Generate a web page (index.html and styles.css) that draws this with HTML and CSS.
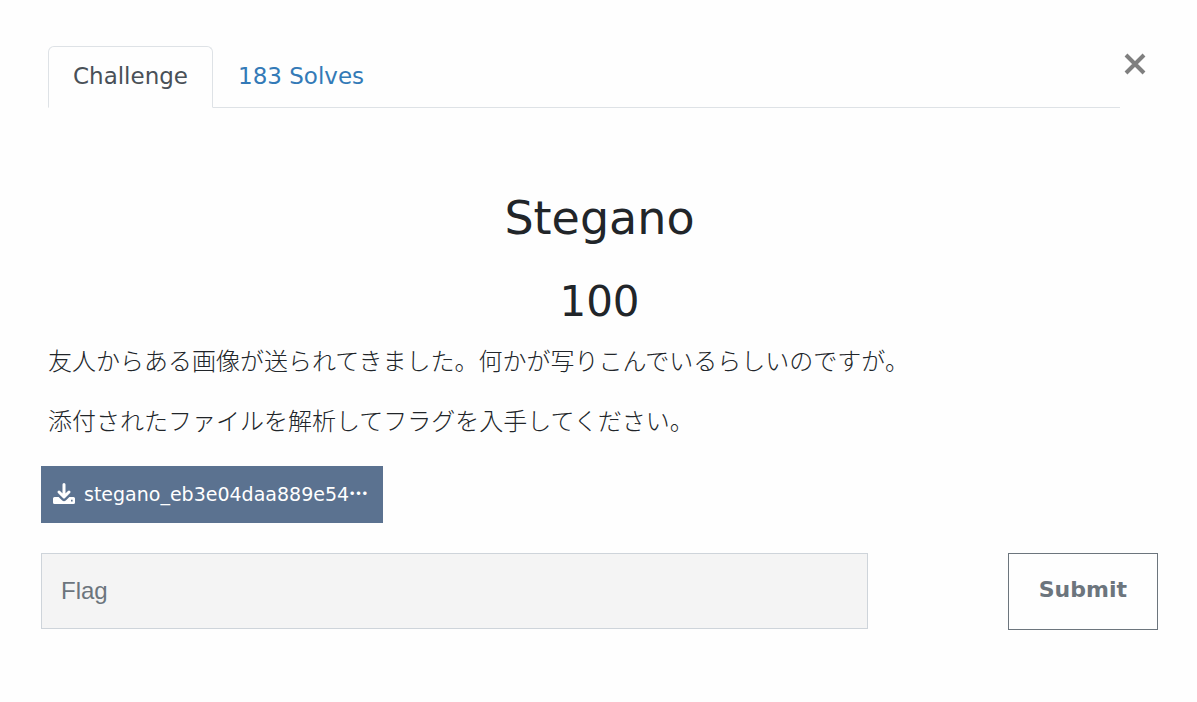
FILE: index.html
```html
<!DOCTYPE html>
<html lang="ja">
<head>
<meta charset="utf-8">
<meta name="viewport" content="width=device-width, initial-scale=1">
<title>Stegano</title>
<link rel="stylesheet" href="styles.css">
</head>
<body>
<main class="modal">
  <header class="modal-head">
    <nav class="tabs">
      <a class="tab tab-active" href="#challenge">Challenge</a>
      <a class="tab" href="#solves">183 Solves</a>
    </nav>
    <button class="close" type="button" aria-label="Close">
      <svg class="close-icon" viewBox="0 0 22 22" aria-hidden="true"><path d="M2 2L20 20M20 2L2 20"/></svg>
    </button>
  </header>
  <section class="challenge" id="challenge">
    <h2 class="name">Stegano</h2>
    <h3 class="value">100</h3>
    <div class="description">
      <p>友人からある画像が送られてきました。何かが写りこんでいるらしいのですが。</p>
      <p>添付されたファイルを解析してフラグを入手してください。</p>
    </div>
    <a class="file" href="#file">
      <svg class="file-icon" viewBox="0 0 22 22" aria-hidden="true">
        <path class="tray" fill-rule="evenodd" d="M1.5 14H5.6L9.2 17.6Q11 19 12.8 17.6L16.4 14H20.5Q22 14 22 15.5V19.5Q22 21 20.5 21H1.5Q0 21 0 19.5V15.5Q0 14 1.5 14ZM18 16.8V18.4H19.6V16.8Z"/>
        <path class="arrow" d="M11 1.5V13M6 9L11 14L16 9"/>
      </svg>
      <span>stegano_eb3e04daa889e54<span class="more">…</span></span>
    </a>
    <form class="answer">
      <input class="flag" type="text" placeholder="Flag" aria-label="Flag">
      <button class="submit" type="button">Submit</button>
    </form>
  </section>
</main>
</body>
</html>
```
FILE: styles.css
```css
* {
  box-sizing: border-box;
}

body {
  margin: 0;
  background: #fefefe;
  color: #212529;
  font-family: "DejaVu Sans", "Noto Sans CJK JP", sans-serif;
  font-size: 23px;
}

.modal {
  padding: 46px 39px 72px 41px;
}

.modal-head {
  display: flex;
  align-items: flex-start;
  padding-left: 7px;
}

.tabs {
  display: flex;
  flex: 1;
  border-bottom: 1px solid #dee2e6;
}

.tab {
  margin-bottom: -1px;
  padding: 14px 24px 16px;
  border: 1px solid transparent;
  color: #337ab7;
  line-height: 30px;
  text-decoration: none;
}

.tab-active {
  border-color: #dee2e6 #dee2e6 #fefefe;
  border-radius: 6px 6px 0 0;
  background: #fefefe;
  color: #495057;
}

.close {
  display: flex;
  margin-top: 7px;
  padding: 0 12px 0 4px;
  border: 0;
  background: none;
}

.close-icon {
  width: 22px;
  height: 22px;
  fill: none;
  stroke: #7f7f7f;
  stroke-width: 4;
}

.challenge {
  padding-top: 80px;
}

.name,
.value {
  margin: 0;
  font-weight: 400;
  text-align: center;
}

.name {
  font-size: 46px;
  line-height: 60px;
}

.value {
  margin-top: 26px;
  font-size: 42px;
  line-height: 56px;
}

.description {
  padding: 12px 7px 4px;
  font-family: "Noto Sans CJK JP", sans-serif;
  font-size: 24px;
  font-weight: 300;
  line-height: 36px;
}

.description p {
  margin: 0 0 24px;
}

.file {
  display: flex;
  align-items: center;
  gap: 9px;
  width: max-content;
  height: 57px;
  padding: 0 15px 2px 12px;
  background: #5b7290;
  color: #fff;
  font-size: 19px;
  line-height: 28px;
  text-decoration: none;
}

.file-icon {
  width: 22px;
  height: 22px;
  fill: #fff;
}

.arrow {
  fill: none;
  stroke: #fff;
  stroke-width: 3;
  stroke-linecap: round;
  stroke-linejoin: round;
}

.more {
  font-family: "Noto Sans CJK JP", sans-serif;
  font-weight: 900;
}

.answer {
  display: flex;
  align-items: flex-start;
  justify-content: space-between;
  margin-top: 30px;
}

.flag {
  width: 74%;
  padding: 20px 19px;
  border: 1px solid #ced4da;
  border-radius: 0;
  background: #f4f4f4;
  color: #495057;
  font-family: "Liberation Sans", Arial, sans-serif;
  font-size: 24px;
  line-height: 34px;
}

.flag::placeholder {
  color: #6c757d;
  opacity: 1;
}

.submit {
  padding: 18px 30px 22px;
  border: 1px solid #6c757d;
  background: transparent;
  color: #6c757d;
  font-family: "DejaVu Sans", sans-serif;
  font-size: 22px;
  font-weight: 700;
  line-height: 35px;
}
```
